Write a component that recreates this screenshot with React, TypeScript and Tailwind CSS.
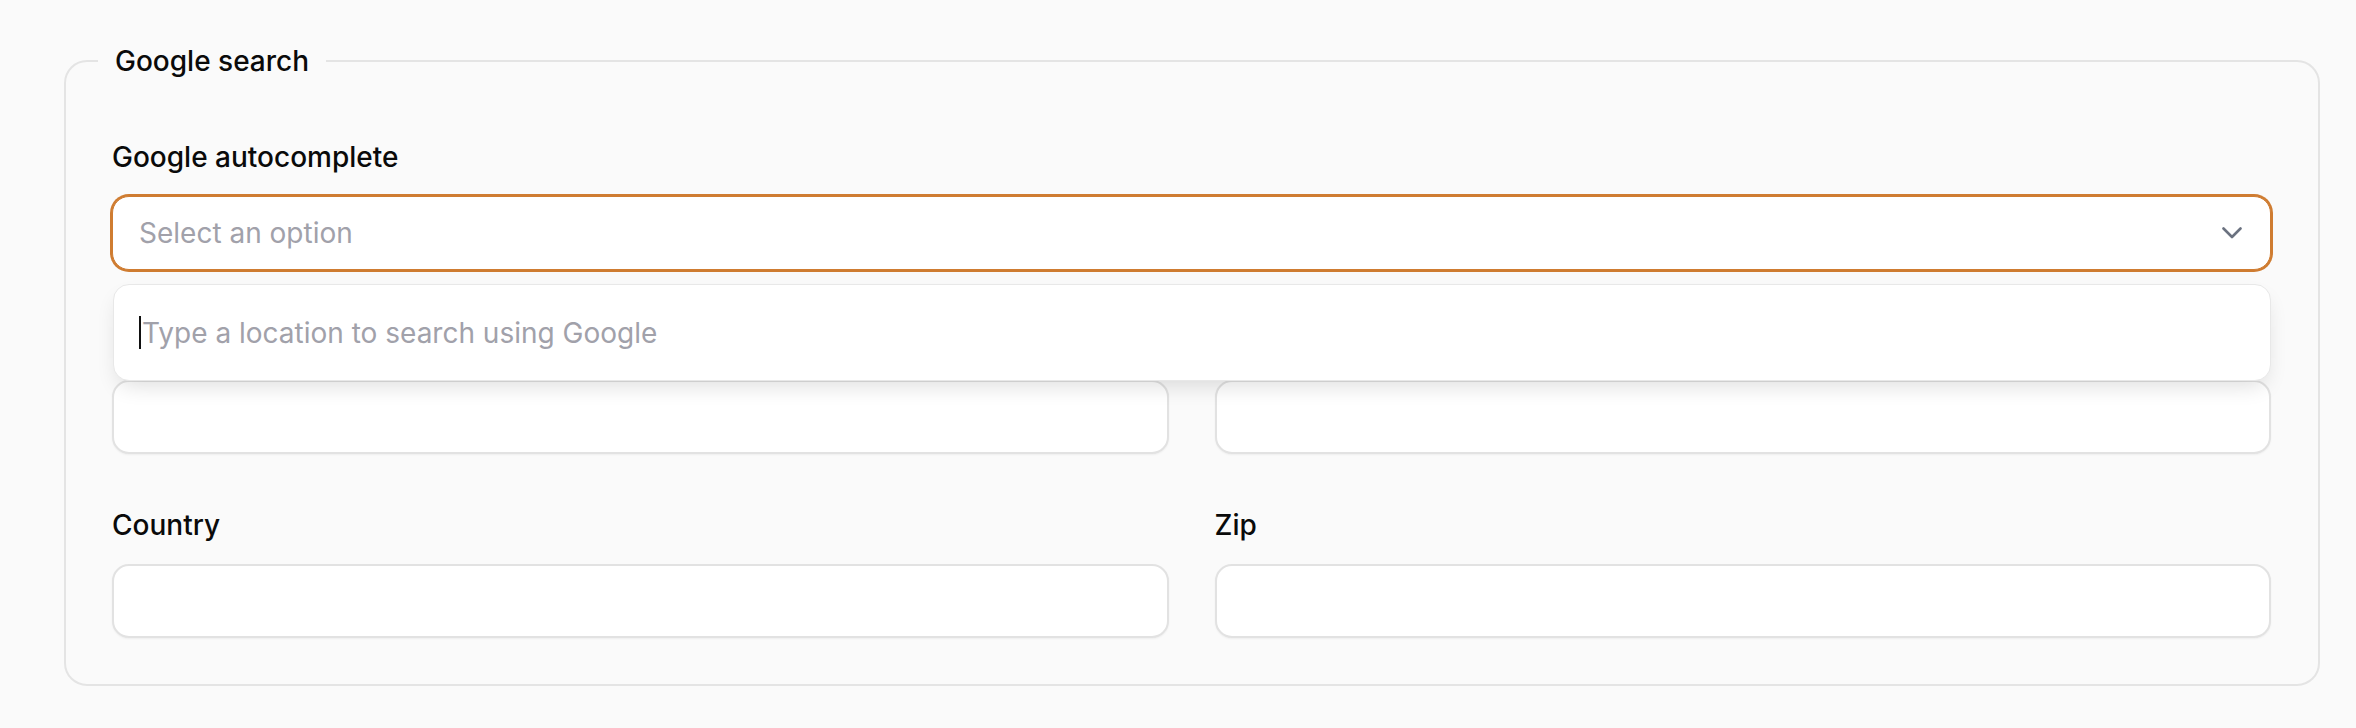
// row 2 labels sit under the open dropdown, so they are left blank here
const FIELDS = [
  { id: 'street', label: '' },
  { id: 'city', label: '' },
  { id: 'country', label: 'Country' },
  { id: 'zip', label: 'Zip' },
]

function Label({ children }: { children?: React.ReactNode }) {
  return <div className="mb-[19px] h-[40px] text-[28px] leading-[40px] font-medium">{children}</div>
}

function Chevron() {
  return (
    <svg width="20" height="12" viewBox="0 0 20 12" fill="none" className="text-[#6b7280]">
      <path d="M1.5 1.5 L10 10 L18.5 1.5" stroke="currentColor" strokeWidth="2.6" strokeLinecap="round" strokeLinejoin="round" />
    </svg>
  )
}

export default function App() {
  return (
    <div className="min-h-[728px] bg-[#fafafa] pt-[41px] pl-[64px] pr-[36px] font-[Inter,sans-serif] text-[#0a0a0a]">
      <fieldset className="min-w-0 rounded-[23px] border-2 border-[#e4e4e4] pl-[46px] pr-[47px] pt-[56px] pb-[46px]">
        <legend className="-ml-[14px] px-[17px] text-[28px] leading-[40px] font-medium">Google search</legend>

        <div className="relative">
          <Label>Google autocomplete</Label>
          <div className="flex h-[74px] w-full items-center justify-between rounded-[17px] border border-[#cf7c31] bg-white pl-[26px] pr-[28px] ring-2 ring-[#cf7c31]">
            <span className="text-[28px] text-[#a1a1aa]">Select an option</span>
            <Chevron />
          </div>

          {/* open dropdown */}
          <div className="absolute left-px right-0 top-[147px] z-10 flex h-[97px] items-center rounded-[16px] border border-[#e8e8e8] bg-white pl-[25px] shadow-[0_10px_22px_-6px_rgba(0,0,0,0.14)]">
            <span className="h-[33px] w-[2px] bg-[#111]" />
            <span className="ml-px text-[28px] text-[#a1a1aa]">Type a location to search using Google</span>
          </div>
        </div>

        <div className="mt-[51px] grid grid-cols-2 gap-x-[46px] gap-y-[51px]">
          {FIELDS.map(f => (
            <div key={f.id}>
              <Label>{f.label}</Label>
              <div className="h-[74px] rounded-[17px] border-2 border-[#e2e2e2] bg-white shadow-[0_1px_2px_rgba(0,0,0,0.05)]" />
            </div>
          ))}
        </div>
      </fieldset>
    </div>
  )
}
